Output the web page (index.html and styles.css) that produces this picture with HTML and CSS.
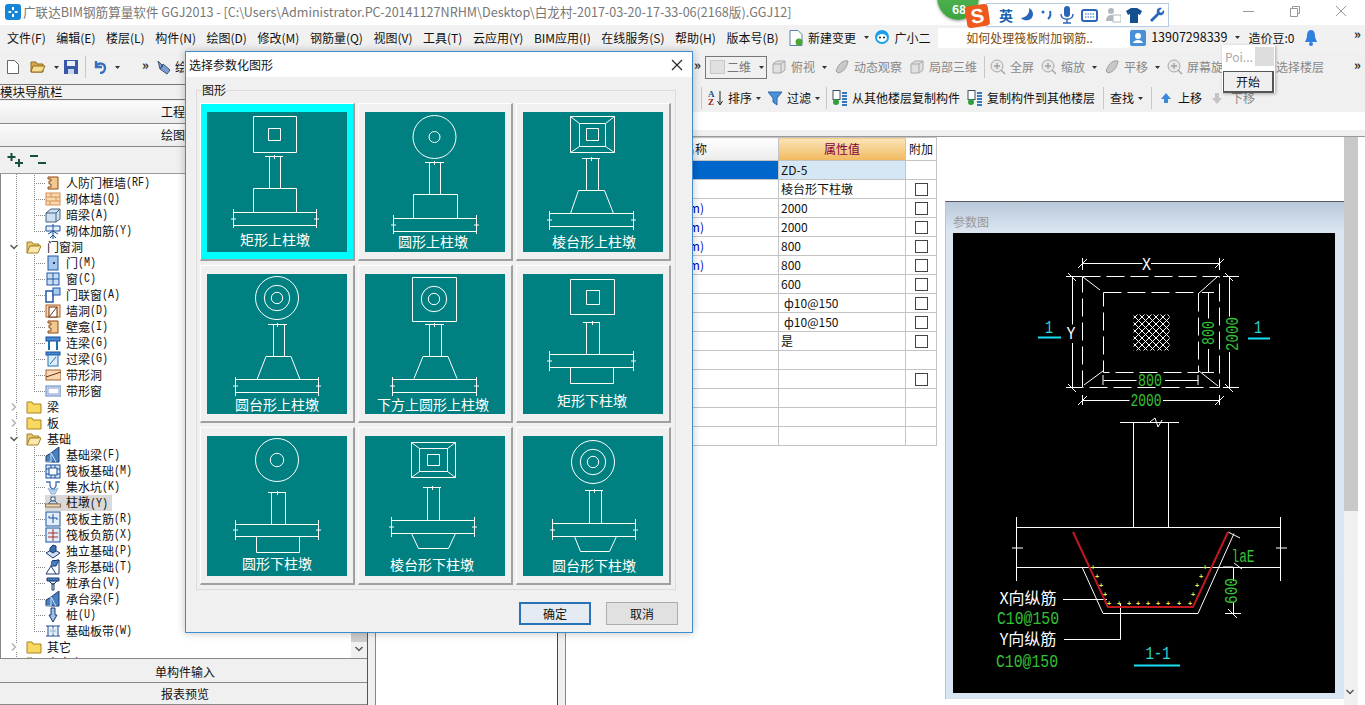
FILE: index.html
```html
<!DOCTYPE html>
<html lang="zh-CN">
<head>
    <meta charset="UTF-8">
    <title>广联达BIM钢筋算量软件 GGJ2013</title>
    <link rel="stylesheet" href="styles.css">
</head>
<body>
    <svg class="defs" width="0" height="0">
        <defs>
            <symbol id="i-frame" viewBox="0 0 16 16"><path d="M3 2h10v12H3v-2h3V9H4V6h2V4H3z" fill="#f0c890" stroke="#8a4a10"/></symbol>
            <symbol id="i-brick" viewBox="0 0 16 16"><rect x="1" y="2" width="14" height="12" fill="#f8d8b0" stroke="#d89050"/><path d="M1 6h14M1 10h14M6 2v4M11 6v4M5 10v4" stroke="#d89050" fill="none"/></symbol>
            <symbol id="i-beam" viewBox="0 0 16 16"><path d="M1 6l5-4h9v10l-4 3H1z" fill="#cfe0f0" stroke="#406080"/><path d="M1 6h10v9M11 6l4-4" stroke="#406080" fill="none"/></symbol>
            <symbol id="i-addbar" viewBox="0 0 16 16"><path d="M1 3h14v5H1zM8 1v15M3 11l5-3 5 3M5 15l3-3 3 3" fill="#e8f0fa" stroke="#1a50a0"/></symbol>
            <symbol id="i-door" viewBox="0 0 16 16"><rect x="3" y="1" width="10" height="14" fill="#a8c8ec" stroke="#2058a8"/><rect x="8" y="7" width="2" height="2" fill="#1a3a70"/></symbol>
            <symbol id="i-window" viewBox="0 0 16 16"><rect x="2" y="2" width="12" height="12" fill="#c8dcf4" stroke="#2058a8"/><path d="M8 2v12M2 8h12" stroke="#2058a8"/></symbol>
            <symbol id="i-doorwin" viewBox="0 0 16 16"><rect x="1" y="4" width="7" height="11" fill="#fff" stroke="#2058a8" stroke-width="1.5"/><rect x="8" y="1" width="7" height="7" fill="#a8c8ec" stroke="#2058a8"/></symbol>
            <symbol id="i-hole" viewBox="0 0 16 16"><rect x="1" y="2" width="14" height="12" fill="#f8d8b0" stroke="#a86030"/><rect x="4" y="4" width="8" height="10" fill="#fff" stroke="#703010"/><path d="M4 14l8-10" stroke="#703010"/></symbol>
            <symbol id="i-link" viewBox="0 0 16 16"><rect x="1" y="2" width="14" height="4" fill="#4a88d0" stroke="#1a50a0"/><path d="M4 6v9M12 6v9" stroke="#1a70b0" stroke-width="2"/></symbol>
            <symbol id="i-lintel" viewBox="0 0 16 16"><rect x="1" y="1" width="14" height="3" fill="#4a88d0" stroke="#1a50a0"/><rect x="3" y="4" width="10" height="11" fill="#e0ecf8" stroke="#1a70b0"/><path d="M5 13l6-7" stroke="#1a70b0"/></symbol>
            <symbol id="i-strip" viewBox="0 0 16 16"><rect x="1" y="3" width="15" height="10" fill="#f8d8b0" stroke="#a86030"/><path d="M1 10l15-5" stroke="#703010"/></symbol>
            <symbol id="i-stripwin" viewBox="0 0 16 16"><rect x="1" y="3" width="15" height="10" fill="#dfe8f8" stroke="#6080c0"/><rect x="3" y="5" width="11" height="6" fill="#fff" stroke="#8aa0d0"/></symbol>
            <symbol id="i-fbeam" viewBox="0 0 16 16"><path d="M1 15V9l5-3 8-6v15z" fill="#4a80c0" stroke="#1a3a70"/><path d="M6 6v9h-5M6 6l5 9" stroke="#cfe0f0" fill="none"/></symbol>
            <symbol id="i-raft" viewBox="0 0 16 16"><rect x="1" y="2" width="14" height="13" fill="#dce8f6" stroke="#1a50a0"/><rect x="4" y="5" width="8" height="7" fill="#fff" stroke="#1a50a0"/><path d="M1 6h3M12 6h3M1 11h3M12 11h3M6 2v3M10 2v3M6 12v3M10 12v3" stroke="#1a50a0"/></symbol>
            <symbol id="i-pit" viewBox="0 0 16 16"><path d="M1 3h4v4l2 3h2l2-3V3h4" fill="none" stroke="#4070b0" stroke-width="1.3"/><path d="M3 9l3 6h4l3-6-3 2H6z" fill="#bcd4ee" stroke="#90b0d8"/></symbol>
            <symbol id="i-pier" viewBox="0 0 16 16"><rect x="6" y="2" width="4" height="4" fill="#f2f2f2" stroke="#3a5a80"/><path d="M3 9l3-3h4l3 3z" fill="#c8d8e8" stroke="#3a5a80"/><rect x="0.5" y="9" width="15" height="3" fill="#f0d8b8" stroke="#907050"/></symbol>
            <symbol id="i-rmain" viewBox="0 0 16 16"><rect x="1" y="1" width="14" height="14" fill="#e4eef8" stroke="#1a50a0"/><path d="M8 3v9M4 7h8M4 5v2M12 7v2" stroke="#1a50a0" fill="none"/></symbol>
            <symbol id="i-rneg" viewBox="0 0 16 16"><rect x="1" y="1" width="14" height="14" fill="#e4eef8" stroke="#1a50a0"/><path d="M8 2v12M3 6h10M3 10h10" stroke="#a03030" fill="none"/></symbol>
            <symbol id="i-iso" viewBox="0 0 16 16"><path d="M1 10l7-4 7 4-7 5z" fill="#d0e0f2" stroke="#1a3a70"/><path d="M5 5l3-3 3 1v5l-3 2-3-2z" fill="#3a70b0" stroke="#1a3a70"/></symbol>
            <symbol id="i-stripf" viewBox="0 0 16 16"><path d="M1 15l5-8 1-5 7-1v14z" fill="#fff" stroke="#1a3a70"/><path d="M7 2l7-1-3 6h-5M6 7l5 8" fill="#4a80c0" stroke="#1a3a70"/></symbol>
            <symbol id="i-cap" viewBox="0 0 16 16"><path d="M2 3h12v3H2z" fill="#4a80c0" stroke="#1a3a70"/><path d="M4 6h8L9 9H7zM7 9h2v6H7z" fill="#dce8f6" stroke="#1a3a70"/></symbol>
            <symbol id="i-pile" viewBox="0 0 16 16"><path d="M6 1h4v7h2l-4 7-4-7h2z" fill="#9cc0e8" stroke="#1a3a70"/></symbol>
            <symbol id="i-band" viewBox="0 0 16 16"><path d="M1 3h14M1 13h14M3 13V3M8 13V3M13 13V3M5 8h6" stroke="#1a4a90" fill="none"/><rect x="4" y="5" width="8" height="6" fill="#cfe0f0" opacity=".7"/></symbol>
            <symbol id="i-folder" viewBox="0 0 16 16"><path d="M1 3h5l1 2h8v9H1z" fill="#f8d860" stroke="#a88420"/></symbol>
            <symbol id="i-folderopen" viewBox="0 0 16 16"><path d="M1 3h5l1 2h6v2H4l-3 7z" fill="#e8c878" stroke="#a88420"/><path d="M4 7h11l-3 7H1z" fill="#fbe8b0" stroke="#a88420"/></symbol>
            <symbol id="i-chevd" viewBox="0 0 8 8"><path d="M0.5 2l3.5 3.5L7.5 2" fill="none" stroke="#555" stroke-width="1.4"/></symbol>
            <symbol id="i-chevr" viewBox="0 0 8 8"><path d="M2 0.5L5.500 4 2 7.5" fill="none" stroke="#b0b0b0" stroke-width="1.4"/></symbol>
            <symbol id="i-arrow" viewBox="0 0 5 3"><path d="M0 0h5L2.5 3z" fill="#333"/></symbol>
            <symbol id="i-gray" viewBox="0 0 16 16"><path d="M2 5l4-3h8v9l-4 3H2z" fill="#e0e0e0" stroke="#a8a8a8"/><path d="M2 5h8v9M10 5l4-3" stroke="#a8a8a8" fill="none"/></symbol>
            <symbol id="i-orbit" viewBox="0 0 16 16"><path d="M2 12c3-8 7-11 12-10-1 6-4 11-10 12z" fill="#c8c8c8" stroke="#a0a0a0"/></symbol>
            <symbol id="i-lens" viewBox="0 0 16 16"><circle cx="7" cy="7" r="6" fill="#e8e8e8" stroke="#a8a8a8"/><path d="M4 7h6M7 4v6M11 11l4 4" stroke="#a0a0a0" stroke-width="1.3"/></symbol>
            <symbol id="i-copy" viewBox="0 0 16 16"><rect x="1" y="0.5" width="7" height="9" fill="#fff" stroke="#405060"/><circle cx="4" cy="12" r="3" fill="#2e9e3e"/><path d="M10 3h5M10 6h5M10 9h5M10 12h5M10 15h5" stroke="#3478c0" stroke-width="2"/></symbol>
        </defs>
    </svg>

    <div class="app">
        <header class="titlebar">
            <svg class="app-icon" width="16" height="16" viewBox="0 0 16 16"><rect width="16" height="16" rx="3" fill="#1685d8"/><path d="M8 3v10M3.5 8h9" stroke="#fff" stroke-width="2"/><circle cx="8" cy="8" r="2" fill="#1685d8"/></svg>
            <span class="title-text">广联达BIM钢筋算量软件 GGJ2013 - [C:\Users\Administrator.PC-20141127NRHM\Desktop\白龙村-2017-03-20-17-33-06(2168版).GGJ12]</span>
            <div class="window-btns">
                <svg width="12" height="12" viewBox="0 0 12 12"><path d="M0 6.5h11" stroke="#999"/></svg>
                <svg width="12" height="12" viewBox="0 0 12 12"><path d="M1.5 3.5h7v8h-7zM3.5 3.500v-2h7v7h-2" fill="none" stroke="#999"/></svg>
                <svg width="12" height="12" viewBox="0 0 12 12"><path d="M1 1l10 10M11 1L1 11" stroke="#999"/></svg>
            </div>
        </header>

        <nav class="menubar">
            <span>文件(F)</span><span>编辑(E)</span><span>楼层(L)</span><span>构件(N)</span><span>绘图(D)</span><span>修改(M)</span><span>钢筋量(Q)</span><span>视图(V)</span><span>工具(T)</span><span>云应用(Y)</span><span>BIM应用(I)</span><span>在线服务(S)</span><span>帮助(H)</span><span>版本号(B)</span>
            <span class="tool">
                <svg width="14" height="16" viewBox="0 0 14 16"><path d="M1 .5h8l4 4v11H1z" fill="#fff" stroke="#5a80b0"/><circle cx="10" cy="12" r="3.5" fill="#4aa832"/></svg>
                新建变更
                <svg class="arrow" width="5" height="3"><use href="#i-arrow"/></svg>
            </span>
            <span class="tool helper">
                <svg width="16" height="16" viewBox="0 0 16 16"><circle cx="8" cy="7" r="7" fill="#18a0e8"/><ellipse cx="8" cy="8" rx="5" ry="4" fill="#fff"/><circle cx="6" cy="7.5" r="1" fill="#123"/><circle cx="10" cy="7.5" r="1" fill="#123"/></svg>
                广小二
            </span>
            <span class="notice">如何处理筏板附加钢筋..</span>
            <span class="tool account">
                <svg width="16" height="16" viewBox="0 0 16 16"><rect width="16" height="16" rx="2" fill="#4a90d8"/><circle cx="8" cy="6" r="3" fill="#fff"/><path d="M3 13c1-4 9-4 10 0z" fill="#fff"/></svg>
                13907298339
                <svg class="arrow" width="5" height="3"><use href="#i-arrow"/></svg>
            </span>
            <span class="beans">造价豆:0</span>
            <svg class="bell" width="12" height="16" viewBox="0 0 12 16"><path d="M6 0c3 0 4 3 4 6s2 5 2 6H0c0-1 2-3 2-6s1-6 4-6z" fill="#2f7fe0"/><circle cx="6" cy="14" r="2" fill="#2f7fe0"/></svg>
            <span class="more">»</span>
        </nav>

        <div class="toolbar">
            <div class="tool-left">
                <svg width="12" height="14" viewBox="0 0 12 14"><path d="M.5.5h7l4 4v9H.5z" fill="#fff" stroke="#666"/></svg>
                <svg width="16" height="14" viewBox="0 0 16 14"><path d="M1 2h5l1 2h6v8H1z" fill="#d8a850" stroke="#906a20"/><path d="M3 6h12l-3 6H1z" fill="#f8dc90" stroke="#906a20"/></svg>
                <svg class="arrow" width="5" height="3"><use href="#i-arrow"/></svg>
                <svg class="save" width="14" height="14" viewBox="0 0 14 14"><rect width="14" height="14" fill="#3858a8"/><rect x="3" y="1" width="8" height="5" fill="#e8eef8"/><rect x="4" y="9" width="6" height="5" fill="#c8d4e8"/></svg>
                <span class="sep"></span>
                <svg class="undo" width="14" height="14" viewBox="0 0 14 14"><path d="M3 1v6h6M3 6c3-4 9-3 9 2 0 3-2 5-5 5" fill="none" stroke="#3a70c0" stroke-width="2.4"/></svg>
                <svg class="arrow" width="5" height="3"><use href="#i-arrow"/></svg>
                <span class="more more-left">»</span>
                <svg class="draw-icon" width="16" height="16" viewBox="0 0 16 16"><path d="M2 2l5 5-3 3zM7 5l7 6-3 4-7-5z" fill="#7aa0d8" stroke="#405070"/></svg>
                <span class="clip-draw">绘图</span>
            </div>
            <div class="tool-right">
                <span class="more">»</span>
                <span class="combo"><i class="swatch"></i>二维<svg class="arrow" width="5" height="3"><use href="#i-arrow"/></svg></span>
                <span class="tool off after-combo"><svg width="16" height="16"><use href="#i-gray"/></svg>俯视<svg class="arrow" width="5" height="3"><use href="#i-arrow"/></svg></span>
                <span class="tool off"><svg width="16" height="16"><use href="#i-orbit"/></svg>动态观察</span>
                <span class="tool off"><svg width="16" height="16"><use href="#i-gray"/></svg>局部三维</span>
                <span class="sep"></span>
                <span class="tool off after-sep"><svg width="16" height="16"><use href="#i-lens"/></svg>全屏</span>
                <span class="tool off"><svg width="16" height="16"><use href="#i-lens"/></svg>缩放<svg class="arrow" width="5" height="3"><use href="#i-arrow"/></svg></span>
                <span class="tool off"><svg width="16" height="16"><use href="#i-orbit"/></svg>平移<svg class="arrow" width="5" height="3"><use href="#i-arrow"/></svg></span>
                <span class="tool off"><svg width="16" height="16"><use href="#i-lens"/></svg><span class="clip-rotate">屏幕旋转</span></span>
                <span class="tool off floor-pick">选择楼层</span>
                <span class="more more-end">»</span>
            </div>
        </div>

        <div class="workspace">
            <aside class="nav">
                <div class="nav-head">模块导航栏</div>
                <div class="nav-tab">工程设置</div>
                <div class="nav-tab">绘图输入</div>
                <div class="tree-tools">
                    <svg width="17" height="15" viewBox="0 0 17 15"><path d="M4.500 0v8M.5 4h8M12 6v8M8 10h8" stroke="#14503a" stroke-width="2"/></svg>
                    <svg width="17" height="15" viewBox="0 0 17 15"><path d="M0 3h8M8 10h8" stroke="#14503a" stroke-width="2"/></svg>
                </div>
                <div class="tree">
                    <div class="tree-track"><span></span><svg width="10" height="8"><use href="#i-chevd"/></svg></div>
                    <div class="row child"><i class="twig"></i><svg><use href="#i-frame"/></svg>人防门框墙<b>(RF)</b></div>
                    <div class="row child"><i class="twig"></i><svg><use href="#i-brick"/></svg>砌体墙<b>(Q)</b></div>
                    <div class="row child"><i class="twig"></i><svg><use href="#i-beam"/></svg>暗梁<b>(A)</b></div>
                    <div class="row child"><i class="twig last"></i><svg><use href="#i-addbar"/></svg>砌体加筋<b>(Y)</b></div>
                    <div class="row parent"><svg class="chev"><use href="#i-chevd"/></svg><svg><use href="#i-folderopen"/></svg>门窗洞</div>
                    <div class="row child"><i class="twig"></i><svg><use href="#i-door"/></svg>门<b>(M)</b></div>
                    <div class="row child"><i class="twig"></i><svg><use href="#i-window"/></svg>窗<b>(C)</b></div>
                    <div class="row child"><i class="twig"></i><svg><use href="#i-doorwin"/></svg>门联窗<b>(A)</b></div>
                    <div class="row child"><i class="twig"></i><svg><use href="#i-hole"/></svg>墙洞<b>(D)</b></div>
                    <div class="row child"><i class="twig"></i><svg><use href="#i-frame"/></svg>壁龛<b>(I)</b></div>
                    <div class="row child"><i class="twig"></i><svg><use href="#i-link"/></svg>连梁<b>(G)</b></div>
                    <div class="row child"><i class="twig"></i><svg><use href="#i-lintel"/></svg>过梁<b>(G)</b></div>
                    <div class="row child"><i class="twig"></i><svg><use href="#i-strip"/></svg>带形洞</div>
                    <div class="row child"><i class="twig last"></i><svg><use href="#i-stripwin"/></svg>带形窗</div>
                    <div class="row parent"><svg class="chev"><use href="#i-chevr"/></svg><svg><use href="#i-folder"/></svg>梁</div>
                    <div class="row parent"><svg class="chev"><use href="#i-chevr"/></svg><svg><use href="#i-folder"/></svg>板</div>
                    <div class="row parent"><svg class="chev"><use href="#i-chevd"/></svg><svg><use href="#i-folderopen"/></svg>基础</div>
                    <div class="row child"><i class="twig"></i><svg><use href="#i-fbeam"/></svg>基础梁<b>(F)</b></div>
                    <div class="row child"><i class="twig"></i><svg><use href="#i-raft"/></svg>筏板基础<b>(M)</b></div>
                    <div class="row child"><i class="twig"></i><svg><use href="#i-pit"/></svg>集水坑<b>(K)</b></div>
                    <div class="row child active"><i class="twig"></i><svg><use href="#i-pier"/></svg><span>柱墩<b>(Y)</b></span></div>
                    <div class="row child"><i class="twig"></i><svg><use href="#i-rmain"/></svg>筏板主筋<b>(R)</b></div>
                    <div class="row child"><i class="twig"></i><svg><use href="#i-rneg"/></svg>筏板负筋<b>(X)</b></div>
                    <div class="row child"><i class="twig"></i><svg><use href="#i-iso"/></svg>独立基础<b>(P)</b></div>
                    <div class="row child"><i class="twig"></i><svg><use href="#i-stripf"/></svg>条形基础<b>(T)</b></div>
                    <div class="row child"><i class="twig"></i><svg><use href="#i-cap"/></svg>桩承台<b>(V)</b></div>
                    <div class="row child"><i class="twig"></i><svg><use href="#i-fbeam"/></svg>承台梁<b>(F)</b></div>
                    <div class="row child"><i class="twig"></i><svg><use href="#i-pile"/></svg>桩<b>(U)</b></div>
                    <div class="row child"><i class="twig last"></i><svg><use href="#i-band"/></svg>基础板带<b>(W)</b></div>
                    <div class="row parent"><svg class="chev"><use href="#i-chevr"/></svg><svg><use href="#i-folder"/></svg>其它</div>
                    <div class="row parent"><svg class="chev"><use href="#i-chevr"/></svg><svg><use href="#i-folder"/></svg>自定义</div>
                </div>
                <div class="nav-tab foot first">单构件输入</div>
                <div class="nav-tab foot">报表预览</div>
            </aside>

            <div class="content">
                <div class="toolbar2">
                    <span class="sep"></span>
                    <span class="tool"><svg width="16" height="16" viewBox="0 0 16 16"><text class="az" x="0" y="7">A</text><text class="az red" x="0" y="15">Z</text><path d="M12 1v13M9.500 11l2.500 4 2.500-4" stroke="#222" fill="none"/></svg>排序<svg class="arrow" width="5" height="3"><use href="#i-arrow"/></svg></span>
                    <span class="tool"><svg width="16" height="16" viewBox="0 0 16 16"><path d="M1 2h14L10 8v7l-4-3V8z" fill="#4a90d8" stroke="#2a68a8"/></svg>过滤<svg class="arrow" width="5" height="3"><use href="#i-arrow"/></svg></span>
                    <span class="sep tight"></span>
                    <span class="tool"><svg width="16" height="16"><use href="#i-copy"/></svg>从其他楼层复制构件</span>
                    <span class="tool wide"><svg width="16" height="16"><use href="#i-copy"/></svg>复制构件到其他楼层</span>
                    <span class="sep wide"></span>
                    <span class="tool">查找<svg class="arrow" width="5" height="3"><use href="#i-arrow"/></svg></span>
                    <span class="sep wide"></span>
                    <span class="tool up"><svg width="16" height="16" viewBox="0 0 16 16"><path d="M8 3l5 6h-3v4H6V9H3z" fill="#3a88d8"/></svg>上移</span>
                    <span class="tool off"><svg width="16" height="16" viewBox="0 0 16 16"><path d="M8 14l5-6h-3V3H6v5H3z" fill="#c4c4c4"/></svg>下移</span>
                </div>
                <div class="strip"></div>
                <div class="panes">
                    <div class="list"></div>
                    <div class="props">
                        <table class="attr-table">
                            <colgroup><col class="c-name"><col class="c-value"><col class="c-extra"></colgroup>
                            <thead>
                                <tr><th class="h-name">属性名称</th><th class="h-value">属性值</th><th>附加</th></tr>
                            </thead>
                            <tbody>
                                <tr class="selected"><td></td><td>ZD-5</td><td></td></tr>
                                <tr><td>形状</td><td>棱台形下柱墩</td><td><i class="check"></i></td></tr>
                                <tr><td class="unit">截面长度(mm)</td><td>2000</td><td><i class="check"></i></td></tr>
                                <tr><td class="unit">截面宽度(mm)</td><td>2000</td><td><i class="check"></i></td></tr>
                                <tr><td class="unit">顶面长度(mm)</td><td>800</td><td><i class="check"></i></td></tr>
                                <tr><td class="unit">顶面宽度(mm)</td><td>800</td><td><i class="check"></i></td></tr>
                                <tr><td>高度</td><td>600</td><td><i class="check"></i></td></tr>
                                <tr><td>X向纵筋</td><td class="rebar">ф10@150</td><td><i class="check"></i></td></tr>
                                <tr><td>Y向纵筋</td><td class="rebar">ф10@150</td><td><i class="check"></i></td></tr>
                                <tr><td>其它</td><td>是</td><td><i class="check"></i></td></tr>
                                <tr><td></td><td></td><td></td></tr>
                                <tr><td></td><td></td><td><i class="check"></i></td></tr>
                                <tr><td></td><td></td><td></td></tr>
                                <tr><td></td><td></td><td></td></tr>
                                <tr><td></td><td></td><td></td></tr>
                            </tbody>
                        </table>
                        <section class="param-win">
                            <div class="param-title">参数图</div>
                            <svg class="param-canvas" width="382" height="460" viewBox="0 0 382 460">
                                <defs>
                                    <pattern id="hatch" width="7" height="7" patternUnits="userSpaceOnUse">
                                        <path d="M0 0l7 7M7 0L0 7" stroke="#fff" stroke-width="1"/>
                                    </pattern>
                                </defs>
                                <g class="cad">
                                    <path d="M129.500 30.500h60M198 30.500h68M129.500 25v12M266.500 25v12M125 35l9-9M262 35l9-9"/>
                                    <path class="dash" d="M129.500 43.500h137v111h-137z"/>
                                    <path class="dash" d="M150.500 59.500h95v80h-95z"/>
                                    <path d="M130 44l17 13M264 44l-19 17M131 152l19-14M265 153l-19-15"/>
                                    <rect x="180.500" y="81.500" width="36" height="36" fill="url(#hatch)"/>
                                    <path d="M119.500 43.500v48M119.500 110v44.500M113 43.500h16M113 154.500h16M115 40l8 8M115 151l8 8"/>
                                    <path d="M276.500 43.500v40M276.500 119v35.500M270 43.500h16M270 154.500h16M272 40l8 8M272 151l8 8"/>
                                    <path d="M255.500 59.500v26M255.500 116v23.500M249 59.500h12M249 139.500h12"/>
                                    <path d="M150.500 147.500h33M212 147.500h33.500M150 142v10M245 142v10"/>
                                    <path d="M129.500 167.500h47M210 167.500h56.500M129.500 162v10M266.500 162v10M125 172l9-9M262 172l9-9"/>
                                    <path d="M167 189.500h59M180.500 189.500v105M215.500 189.500v105M197 189l5-4 3 9 4-7"/>
                                    <path d="M63.500 294.500h264M63.500 334.500h264M63.500 284v64M327.500 284v64M59 315h11M323 315h11"/>
                                    <path d="M129 334l21 46.500h95l36-80"/>
                                    <path d="M275 299l12 6M281 330l8 6M270 334h10M280.500 334v14M280.500 369v11M272 380.500h16M275 376l9 9"/>
                                    <path d="M110 366.500h44M111 406.500h56.500v-36"/>
                                </g>
                                <path class="rebar-line" d="M120 299l35 75h85l35-75"/>
                                <g class="dots">
                                    <text x="140" y="337">+</text><text x="144" y="346">+</text><text x="148" y="355">+</text><text x="152" y="364">+</text><text x="156" y="373">+</text><text x="166" y="373">+</text><text x="176" y="373">+</text><text x="185" y="373">+</text><text x="195" y="373">+</text><text x="205" y="373">+</text><text x="215" y="373">+</text><text x="226" y="373">+</text><text x="237" y="373">+</text><text x="240" y="364">+</text><text x="244" y="355">+</text><text x="248" y="346">+</text><text x="252" y="337">+</text>
                                </g>
                                <g class="cad-text">
                                    <text x="193.500" y="37" textLength="9" lengthAdjust="spacingAndGlyphs">X</text>
                                    <text x="118" y="106" textLength="9" lengthAdjust="spacingAndGlyphs">Y</text>
                                    <text class="green" x="197" y="153" textLength="24" lengthAdjust="spacingAndGlyphs">800</text>
                                    <text class="green" x="193" y="173" textLength="31" lengthAdjust="spacingAndGlyphs">2000</text>
                                    <text class="green" transform="translate(261 100) rotate(-90)" textLength="24" lengthAdjust="spacingAndGlyphs">800</text>
                                    <text class="green" transform="translate(285 101) rotate(-90)" textLength="34" lengthAdjust="spacingAndGlyphs">2000</text>
                                    <text class="cyan" x="96" y="100" textLength="8" lengthAdjust="spacingAndGlyphs">1</text>
                                    <text class="cyan" x="305" y="100" textLength="8" lengthAdjust="spacingAndGlyphs">1</text>
                                    <text class="green" x="290" y="329" textLength="23" lengthAdjust="spacingAndGlyphs">laE</text>
                                    <text class="green" transform="translate(284 358) rotate(-90)" textLength="26" lengthAdjust="spacingAndGlyphs">600</text>
                                    <text class="green" x="75" y="391" textLength="62" lengthAdjust="spacingAndGlyphs">C10@150</text>
                                    <text class="green" x="74" y="434" textLength="62" lengthAdjust="spacingAndGlyphs">C10@150</text>
                                    <text class="cyan" x="205" y="426" textLength="25" lengthAdjust="spacingAndGlyphs">1-1</text>
                                </g>
                                <text class="cn" x="75" y="371">X向纵筋</text>
                                <text class="cn" x="75" y="412">Y向纵筋</text>
                                <path class="cyan-line" d="M85 104.500h23M295 105.500h22M181 432.500h46"/>
                            </svg>
                        </section>
                        <div class="param-scroll"><span class="thumb"></span><svg class="scroll-down" width="10" height="8"><use href="#i-chevd"/></svg></div>
                    </div>
                </div>
            </div>
        </div>
    </div>

    <!-- 输入法状态条 -->
    <div class="ime">
        <span class="ime-badge">68</span>
        <span class="ime-logo">S</span>
        <div class="ime-bar">
            <span class="ime-lang">英</span>
            <svg width="14" height="16" viewBox="0 0 14 16"><path d="M9 1c1 5-2 9-8 10 3 4 12 3 12-4 0-3-2-5-4-6z" fill="#2a66b8"/></svg>
            <svg width="12" height="14" viewBox="0 0 12 14"><circle cx="2" cy="4" r="1.500" fill="#2a66b8"/><path d="M9 3c1 3 0 6-2 8" stroke="#2a66b8" stroke-width="2" fill="none"/></svg>
            <svg width="14" height="18" viewBox="0 0 14 18"><rect x="4" y="0" width="6" height="11" rx="3" fill="#2a66b8"/><path d="M1 8c0 7 12 7 12 0M7 13v4M3 17h8" stroke="#2a66b8" fill="none" stroke-width="1.500"/></svg>
            <svg width="17" height="13" viewBox="0 0 17 13"><rect x="1" y="1" width="15" height="11" rx="2" fill="#fff" stroke="#2a66b8" stroke-width="2"/><path d="M4 5h9M4 8h9" stroke="#2a66b8" stroke-dasharray="1.500 1"/></svg>
            <svg width="16" height="16" viewBox="0 0 16 16"><circle cx="6" cy="4" r="3" fill="#b0b8c0"/><path d="M1 14c0-8 10-8 10 0z" fill="#b0b8c0"/><rect x="8" y="8" width="8" height="7" fill="#fff" stroke="#b0b8c0"/></svg>
            <svg class="ime-shirt" width="16" height="15" viewBox="0 0 16 15"><path d="M5 0h6l5 3-2 4-2-1v9H4V6L2 7 0 3z" fill="#14508e"/></svg>
            <svg width="16" height="16" viewBox="0 0 16 16"><path d="M15 3l-3 3-2-2 3-3c-4-1-6 2-5 5L1 13l2 2 7-7c3 1 6-1 5-5z" fill="#2a66b8"/></svg>
        </div>
    </div>

    <!-- 悬浮的开始按钮 -->
    <div class="floater">
        <div class="floater-head"><span>Poi...</span><i></i></div>
        <button class="floater-btn">开始</button>
    </div>

    <div class="dialog">
        <div class="dialog-title">
            <span>选择参数化图形</span>
            <svg width="12" height="12" viewBox="0 0 12 12"><path d="M1 1l10 10M11 1L1 11" stroke="#222" stroke-width="1.100"/></svg>
        </div>
        <div class="dialog-body">
            <fieldset class="group">
                <legend>图形</legend>
                <div class="tiles">
                    <div class="tile selected">
                        <svg width="140" height="140" viewBox="0 0 140 140">
                            <path d="M46.500 4.500h43v36h-43zM61.500 16.500h12v12h-12zM58 44.500h18M67.500 43v4M62.500 44.500v32M73.500 44.500v32M46.500 76.500h43v24h-43zM26.500 100.500h83v13h-83zM26.500 97v19M109.500 97v19M24 107h5M107 107h5"/>
                            <text x="68" y="133">矩形上柱墩</text>
                        </svg>
                    </div>
                    <div class="tile">
                        <svg width="140" height="140" viewBox="0 0 140 140">
                            <circle cx="69.500" cy="25" r="21.500"/><circle cx="69.500" cy="25" r="5.500"/>
                            <path d="M60 50.500h19M69.500 49v4M64.500 50.500v32M75.500 50.500v32M48.500 82.500h44v24h-44zM28.500 106.500h83v13h-83zM28.500 103v19M111.500 103v19M26 113h5M109 113h5"/>
                            <text x="68" y="135">圆形上柱墩</text>
                        </svg>
                    </div>
                    <div class="tile">
                        <svg width="140" height="140" viewBox="0 0 140 140">
                            <path d="M47.500 4.500h44v36h-44zM56.500 11.500h26v23h-26zM63.500 16.500h12v12h-12zM47.500 4.500l9 7M91.500 4.500l-9 7M47.500 40.500l9-6M91.500 40.500l-9-6M59 46.500h18M68.500 45v4M63.500 46.500v32M75.500 46.500v32M55.500 78.500h26l9 23M55.500 78.500l-8 23M26.500 101.500h84v13h-84zM26.500 99v19M110.500 99v19M24 108h5M108 108h5"/>
                            <text x="71" y="135">棱台形上柱墩</text>
                        </svg>
                    </div>
                    <div class="tile">
                        <svg width="140" height="140" viewBox="0 0 140 140">
                            <circle cx="70" cy="24" r="21.500"/><circle cx="70" cy="24" r="12.700"/><circle cx="70" cy="24" r="5.700"/>
                            <path d="M61 50.500h19M70.500 49v4M66.500 50.500v32M77.500 50.500v32M59 82.500h25l9 23M59 82.500l-9 23M28.500 105.500h83v13h-83zM28.500 103v19M111.500 103v19M26 112h5M109 112h5"/>
                            <text x="70" y="136">圆台形上柱墩</text>
                        </svg>
                    </div>
                    <div class="tile">
                        <svg width="140" height="140" viewBox="0 0 140 140">
                            <path d="M47.500 3.500h44v44h-44zM60 50.500h19M69.500 49v4M64.500 50.500v32M76.500 50.500v32M58 82.500h25l9 22M58 82.500l-9 22M27.500 105.500h84v13h-84zM27.500 103v19M111.500 103v19M25 112h5M109 112h5"/>
                            <circle cx="69" cy="25" r="12.700"/><circle cx="69" cy="25" r="5.700"/>
                            <text x="68" y="136">下方上圆形上柱墩</text>
                        </svg>
                    </div>
                    <div class="tile">
                        <svg width="140" height="140" viewBox="0 0 140 140">
                            <path d="M47.500 5.500h44v35h-44zM63.500 16.500h13v14h-13zM60 48.500h17M69.500 47v4M63.500 48.500v32M76.500 48.500v32M26.500 80.500h84v13h-84zM26.500 77v20M110.500 77v20M47.500 93.500v16h43v-16M24 87h5M108 87h5"/>
                            <text x="69" y="132">矩形下柱墩</text>
                        </svg>
                    </div>
                    <div class="tile">
                        <svg width="140" height="140" viewBox="0 0 140 140">
                            <circle cx="70" cy="24" r="21.500"/><circle cx="70" cy="24" r="6.700"/>
                            <path d="M61 56.500h18M70.500 55v4M64.500 56.500v32M78.500 56.500v32M28.500 88.500h83v12h-83zM28.500 84v20M111.500 84v20M49.500 100.500v16h43v-16M26 94h5M109 94h5"/>
                            <text x="70" y="133">圆形下柱墩</text>
                        </svg>
                    </div>
                    <div class="tile">
                        <svg width="140" height="140" viewBox="0 0 140 140">
                            <path d="M46.500 6.500h44v35h-44zM54.500 12.500h28v23h-28zM62.500 18.500h12v11h-12zM46.500 6.500l8 6M90.500 6.500l-8 6M46.500 41.500l8-6M90.500 41.500l-8-6M58 51.500h18M67.500 50v4M62.500 51.500v33M74.500 51.500v33M26.500 84.500h83v13h-83zM26.500 81v20M109.500 81v20M46.500 97.500l7 15h30l7-15M24 91h5M107 91h5"/>
                            <text x="67" y="134">棱台形下柱墩</text>
                        </svg>
                    </div>
                    <div class="tile">
                        <svg width="140" height="140" viewBox="0 0 140 140">
                            <circle cx="70" cy="26" r="21.500"/><circle cx="70" cy="26" r="12.700"/><circle cx="70" cy="26" r="5.700"/>
                            <path d="M62 54.500h18M71.500 53v4M66.500 54.500v33M78.500 54.500v33M29.500 87.500h83v13h-83zM29.500 83v21M112.500 83v21M51.500 100.500l6 15h29l7-15M27 94h5M110 94h5"/>
                            <text x="71" y="135">圆台形下柱墩</text>
                        </svg>
                    </div>
                </div>
            </fieldset>
            <div class="dialog-actions">
                <button class="btn primary">确定</button>
                <button class="btn">取消</button>
            </div>
        </div>
    </div>
</body>
</html>
```
FILE: styles.css
```css
* {
    box-sizing: border-box;
}
html, body {
    margin: 0;
    height: 100%;
    overflow: hidden;
}
body {
    background-color: #f0f0f0;
    color: #111;
    font-family: "Noto Sans CJK SC", "Liberation Sans", sans-serif;
    font-size: 12px;
    line-height: 1;
}
.defs {
    position: absolute;
}
.app {
    height: 705px;
    display: flex;
    flex-direction: column;
}

/* title + menu */
.titlebar {
    height: 25px;
    background-color: #fff;
    display: flex;
    align-items: center;
    padding: 0 18px 1px 5px;
    flex: none;
}
.app-icon {
    margin-right: 2px;
}
.title-text {
    color: #777;
    font-size: 12.6px;
    white-space: nowrap;
}
.window-btns {
    margin-left: auto;
    display: flex;
    gap: 34px;
    margin-bottom: 3px;
}
.menubar {
    height: 27px;
    flex: none;
    background-color: #f1f1f1;
    display: flex;
    align-items: center;
    gap: 10.55px;
    padding: 0 0 2px 7px;
    white-space: nowrap;
}
.tool {
    display: inline-flex;
    align-items: center;
    gap: 4px;
    white-space: nowrap;
}
.arrow {
    margin-left: 3px;
    flex: none;
}
.menubar .tool {
    gap: 5px;
}
.helper {
    margin-left: -6px;
}
.notice {
    color: #7a4a10;
    margin-left: -3px;
    width: 192px;
    height: 20px;
    line-height: 20px;
    padding-left: 28px;
    background-color: #fff;
}
.account {
    margin-left: -10.55px;
    font-size: 12.5px;
}
.beans {
    margin-left: -2.5px;
}
.more {
    font-size: 13px;
    font-weight: 700;
    color: #222;
}
.menubar .more {
    margin-left: auto;
    margin-right: 4px;
    margin-bottom: 8px;
}

/* toolbars */
.toolbar {
    height: 32px;
    flex: none;
    display: flex;
    align-items: center;
    padding-bottom: 2px;
    background-color: #f0f0f0;
}
.tool-left {
    width: 693px;
    flex: none;
    display: flex;
    align-items: center;
    gap: 11px;
    padding-left: 7px;
}
.tool-left .arrow {
    margin-left: -3px;
}
.tool-left .save {
    margin-left: -6px;
}
.tool-left .sep {
    margin-left: -4px;
}
.tool-left .undo {
    margin-left: -4px;
}
.tool-left .more-left {
    margin-left: 11px;
    margin-bottom: 6px;
}
.draw-icon {
    margin-left: -4px;
}
.clip-draw {
    width: 9px;
    margin-left: -8px;
    overflow: hidden;
    white-space: nowrap;
}
.tool-right {
    flex: 1;
    display: flex;
    align-items: center;
    gap: 7px;
    padding-left: 1px;
}
.tool-right > .more:first-child {
    margin-right: -3px;
    margin-bottom: 6px;
}
.more-end {
    margin-left: auto;
    margin-right: 4px;
    margin-bottom: 6px;
}
.combo {
    width: 62px;
    height: 23px;
    border: 1px solid #777;
    display: flex;
    align-items: center;
    color: #777;
    padding-left: 4px;
}
.swatch {
    width: 15px;
    height: 14px;
    background-color: #e0e0e0;
    border: 1px solid #c8c8c8;
    margin-right: 2px;
}
.combo .arrow {
    margin-left: 8px;
}
.after-combo {
    margin-left: -3px;
}
.after-sep {
    margin-left: -2px;
}
.off {
    color: #888;
}
.sep {
    width: 1px;
    height: 22px;
    background-color: #c8c8c8;
    flex: none;
}
.clip-rotate {
    width: 35px;
    overflow: hidden;
    white-space: nowrap;
}
.floor-pick {
    margin-left: 47px;
}
.workspace {
    flex: 1;
    display: flex;
    min-height: 0;
}

/* left nav */
.nav {
    width: 368px;
    flex: none;
    display: flex;
    flex-direction: column;
    background-color: #f0f0f0;
    border-right: 1px solid #555;
}
.nav-head {
    height: 16px;
    border-top: 1px solid #777;
    border-bottom: 1px solid #777;
    font-size: 12.5px;
    line-height: 14px;
    white-space: nowrap;
    flex: none;
}
.nav-tab {
    height: 23px;
    line-height: 22px;
    text-align: center;
    padding-left: 3px;
    border-bottom: 1px solid #888;
    background: linear-gradient(#fbfbfb, #ececec);
    flex: none;
}
.nav-head + .nav-tab {
    margin-top: 1px;
}
.nav-tab.foot {
    background: #f0f0f0;
}
.nav-tab.foot.first {
    line-height: 26px;
    height: 24px;
}
.nav-tab.foot:last-child {
    height: 22px;
}
.tree-tools {
    height: 27px;
    flex: none;
    display: flex;
    align-items: center;
    gap: 6px;
    padding-left: 7px;
    border-bottom: 1px solid #999;
}
.tree {
    flex: 1;
    min-height: 0;
    overflow: hidden;
    background-color: #fff;
    background-image: repeating-linear-gradient(to bottom, #888 0 1px, transparent 1px 2px);
    background-size: 1px 100%;
    background-position: 15px 0;
    background-repeat: no-repeat;
    border-left: 1px solid #888;
    border-bottom: 1px solid #888;
    padding-top: 1px;
    position: relative;
}
.tree-track {
    position: absolute;
    top: 0;
    right: 0;
    bottom: 0;
    width: 16px;
    background-color: #f0f0f0;
}
.tree-track span {
    display: block;
    height: 468px;
    background-color: #cdcdcd;
}
.tree-track svg {
    display: block;
    margin: 3px 0 0 3px;
}
.row {
    height: 16px;
    display: flex;
    align-items: center;
    white-space: nowrap;
}
.row svg {
    width: 16px;
    height: 16px;
    flex: none;
}
.row b {
    display: inline-block;
    font-family: "Liberation Mono", monospace;
    font-size: 10px;
    font-weight: 400;
    margin-top: 2px;
    transform: scaleY(1.2);
}
.row.child {
    padding-left: 33px;
}
.row.child svg {
    margin-right: 5px;
}
.twig {
    width: 11px;
    height: 16px;
    flex: none;
    background-image: repeating-linear-gradient(to bottom, #888 0 1px, transparent 1px 2px), repeating-linear-gradient(to right, #888 0 1px, transparent 1px 2px);
    background-size: 1px 100%, 100% 1px;
    background-position: 0 0, 0 8px;
    background-repeat: no-repeat;
}
.twig.last {
    background-size: 1px 8px, 100% 1px;
}
.row.parent {
    padding-left: 9px;
}
.row.parent svg {
    margin-right: 5px;
}
.row.parent .chev {
    width: 8px;
    height: 8px;
    margin-right: 8px;
    background-color: #fff;
}
.active {
    position: relative;
    z-index: 0;
}
.active span {
    background-color: #d9d9d9;
    margin-left: -21px;
    padding: 1px 4px 1px 21px;
    position: relative;
    z-index: -1;
}

/* right side */
.content {
    flex: 1;
    min-width: 0;
    display: flex;
    flex-direction: column;
}
.toolbar2 {
    height: 28px;
    flex: none;
    display: flex;
    align-items: center;
    gap: 6px;
    padding-left: 333px;
    background-color: #f0f0f0;
}
.toolbar2 .arrow {
    margin-left: 0;
}
.toolbar2 .tight {
    margin-right: -1px;
}
.toolbar2 .tool.wide {
    margin-left: 1px;
}
.toolbar2 .sep.wide {
    margin-left: 2px;
}
.toolbar2 .up {
    margin-right: 1px;
}
.toolbar2 .off {
    gap: 6px;
}
.az {
    font-family: "Liberation Serif", serif;
    font-size: 9px;
    font-weight: 700;
    fill: #264a8a;
}
.az.red {
    fill: #a02020;
}
.strip {
    height: 18px;
    flex: none;
    background-color: #fff;
    margin-left: 325px;
}
.panes {
    flex: 1;
    min-height: 0;
    display: flex;
    padding-left: 7px;
    background-color: #f0f0f0;
}
.list {
    width: 183px;
    flex: none;
    background-color: #fff;
    border-right: 1px solid #444;
    border-left: 1px solid #888;
}
.props {
    margin-left: 7px;
    flex: 1;
    display: flex;
    align-items: flex-start;
    background-color: #fff;
    border-top: 1px solid #999;
    border-left: 1px solid #888;
    margin-top: 6px;
    min-width: 0;
}
.attr-table {
    width: 370px;
    flex: none;
    table-layout: fixed;
    border-collapse: collapse;
}
.c-name {
    width: 212px;
}
.c-value {
    width: 127px;
}
.c-extra {
    width: 31px;
}
.attr-table th {
    height: 23px;
    font-weight: 400;
    font-size: 12px;
    border: 1px solid #c4c4c4;
    padding: 0;
}
.attr-table td {
    height: 19px;
    border: 1px solid #c4c4c4;
    padding: 0 2px;
    white-space: nowrap;
    overflow: hidden;
}
.h-name {
    background: linear-gradient(#fff, #ebebeb);
    text-align: right;
    padding-right: 71px !important;
}
.h-value {
    background: linear-gradient(#fbe4b8, #f2b95e);
    color: #800040;
}
.selected td:first-child {
    background-color: #0066cc;
}
.selected td:nth-child(2) {
    background-color: #d5e6f5;
}
.attr-table td:first-child {
    padding-left: 6px;
    color: #111;
}
.attr-table td.unit {
    color: #0000c0;
    text-align: right;
    padding-right: 74px;
}
.attr-table td:nth-child(3) {
    padding: 0;
}
.rebar {
    padding-left: 5px !important;
}
.check {
    display: block;
    width: 13px;
    height: 13px;
    border: 1px solid #444;
    margin: 1px auto 0 9px;
}
.param-win {
    margin: 64px 0 0 8px;
    width: 399px;
    height: 498px;
    flex: none;
    border-top: 1px solid #556;
    border-left: 1px solid #b8c4d0;
    background: linear-gradient(#b9c9d9, #dbe6f2 30px, #d8e5f3);
    padding: 0 9px 0 7px;
}
.param-title {
    height: 31px;
    line-height: 40px;
    color: #999;
    font-size: 12px;
}
.param-canvas {
    display: block;
    background-color: #000;
}
.cad path {
    fill: none;
    stroke: #fff;
    stroke-width: 1;
}
.cad .dash {
    stroke-dasharray: 18 6;
}
.rebar-line {
    fill: none;
    stroke: #c01820;
    stroke-width: 2;
}
.dots text {
    fill: #f0f040;
    font-family: "Liberation Mono", monospace;
    font-size: 7px;
    font-weight: 700;
    text-anchor: middle;
}
.cad-text text {
    fill: #fff;
    font-family: "Liberation Mono", monospace;
    font-size: 18px;
    text-anchor: middle;
}
.cad-text .green {
    fill: #35c135;
}
.cad-text .cyan {
    fill: #2ed8d8;
}
.cn {
    fill: #fff;
    font-size: 16px;
    text-anchor: middle;
}
.cyan-line {
    fill: none;
    stroke: #18e0f0;
    stroke-width: 2;
}
.param-scroll {
    width: 14px;
    height: 568px;
    flex: none;
    position: relative;
    background-color: #f0f0f0;
}
.thumb {
    display: block;
    height: 374px;
    background-color: #c8c8c8;
}
.scroll-down {
    position: absolute;
    left: 1px;
    top: 551px;
}

/* overlays */
.ime {
    position: absolute;
    left: 937px;
    top: 0;
    width: 240px;
    height: 30px;
}
.ime-badge {
    position: absolute;
    left: 0;
    top: -26px;
    width: 42px;
    height: 46px;
    border-radius: 50%;
    background: linear-gradient(#5cc05c, #3ea33e);
    color: #fff;
    font-size: 12px;
    font-weight: 700;
    line-height: 12px;
    text-align: center;
    padding: 29px 0 0 2px;
    box-shadow: 0 1px 3px rgba(0, 0, 0, 0.4);
}
.ime-bar {
    position: absolute;
    left: 49px;
    top: 3px;
    width: 183px;
    height: 24px;
    background-color: #fff;
    border: 1px solid #b8cce4;
    display: flex;
    align-items: center;
    gap: 7px;
    padding-left: 12px;
}
.ime-lang {
    color: #1d5fb0;
    font-size: 14px;
    font-weight: 700;
}
.ime-shirt {
    margin-left: -2px;
}
.ime-logo {
    position: absolute;
    left: 29px;
    top: 5px;
    width: 23px;
    height: 22px;
    z-index: 2;
    background-color: #ee5a1e;
    border-radius: 4px;
    transform: rotate(-8deg);
    color: #fff;
    font-family: "Liberation Sans", sans-serif;
    font-size: 20px;
    font-weight: 700;
    line-height: 22px;
    text-align: center;
}
.floater {
    position: absolute;
    left: 1222px;
    top: 45px;
    width: 53px;
    height: 48px;
    background-color: #fff;
    box-shadow: 1px 1px 3px rgba(0, 0, 0, 0.3);
}
.floater-head {
    height: 26px;
    display: flex;
    align-items: flex-start;
    color: #aaa;
    padding: 6px 0 0 3px;
    justify-content: space-between;
}
.floater-head i {
    width: 19px;
    height: 19px;
    margin-top: -4px;
    margin-right: 1px;
    background-color: #ddd;
}
.floater-btn {
    display: block;
    width: 51px;
    height: 22px;
    margin-left: 1px;
    border: 1px solid #555;
    border-right-width: 2px;
    border-bottom-width: 2px;
    background-color: #efefef;
    font: inherit;
    color: #111;
    padding: 0;
}
.dialog {
    position: absolute;
    left: 185px;
    top: 51px;
    width: 508px;
    height: 582px;
    background-color: #f0f0f0;
    border: 1px solid #3e8bd2;
    box-shadow: 0 0 8px rgba(0, 0, 0, 0.25);
}
.dialog-title {
    height: 25px;
    background-color: #fff;
    display: flex;
    align-items: center;
    justify-content: space-between;
    padding: 0 9px 0 3px;
}
.dialog-body {
    padding: 7px 0 0 10px;
}
.group {
    width: 480px;
    height: 506px;
    border: 1px solid #dcdcdc;
    margin: 0;
    padding: 7px 0 0 3px;
}
.group legend {
    padding: 0;
    margin-left: 2px;
    font-size: 12px;
}
.tiles {
    display: grid;
    grid-template-columns: repeat(3, 155px);
    grid-auto-rows: 158px;
    column-gap: 3px;
    row-gap: 4px;
}
.tile {
    display: flex;
    padding: 8px 0 0 6px;
    border-right: 2px solid #a0a0a0;
    border-bottom: 2px solid #a0a0a0;
    border-left: 1px solid #fff;
    border-top: 1px solid #fff;
}
.tile.selected {
    background-color: #00ffff;
}
.tile svg {
    display: block;
    background-color: #008080;
}
.tile path, .tile circle {
    fill: none;
    stroke: #fff;
    stroke-width: 1;
}
.tile text {
    fill: #fff;
    font-size: 14px;
    text-anchor: middle;
}
.dialog-actions {
    display: flex;
    justify-content: flex-end;
    gap: 15px;
    padding: 12px 14px 0 0;
}
.btn {
    width: 72px;
    height: 23px;
    border: 1px solid #adadad;
    background-color: #e1e1e1;
    font: inherit;
    color: #111;
    padding: 0;
}
.btn.primary {
    border: 2px solid #2a72b8;
    background-color: #e4ebf2;
}
```
